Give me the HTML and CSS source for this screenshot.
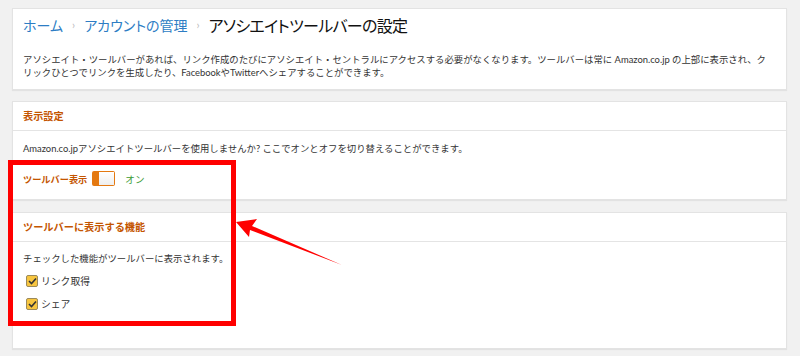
FILE: index.html
```html
<html>
    <head>
        <meta charset="UTF-8">
        <title>アソシエイトツールバーの設定</title>
        <link rel="stylesheet" href="styles.css">
    </head>
    <body>
        <div class="card intro">
            <div class="crumbs">
                <a class="crumb" href="#">ホーム</a>
                <span class="sep">›</span>
                <a class="crumb" href="#">アカウントの管理</a>
                <span class="sep">›</span>
                <span class="current">アソシエイトツールバーの設定</span>
            </div>
            <p class="desc">アソシエイト・ツールバーがあれば、リンク作成のたびにアソシエイト・セントラルにアクセスする必要がなくなります。ツールバーは常に Amazon.co.jp の上部に表示され、ク<br>リックひとつでリンクを生成したり、FacebookやTwitterへシェアすることができます。</p>
        </div>

        <div class="card">
            <div class="card-head">表示設定</div>
            <div class="card-body">
                <p class="text">Amazon.co.jpアソシエイトツールバーを使用しませんか? ここでオンとオフを切り替えることができます。</p>
                <div class="toggle-row">
                    <span class="toggle-label">ツールバー表示</span>
                    <span class="toggle"><span class="knob"></span></span>
                    <span class="toggle-state">オン</span>
                </div>
            </div>
        </div>

        <div class="card features">
            <div class="card-head">ツールバーに表示する機能</div>
            <div class="card-body">
                <p class="text">チェックした機能がツールバーに表示されます。</p>
                <label class="check"><span class="box"><svg width="9" height="8" viewBox="0 0 9 8"><path d="M1 4 L3.5 6.5 L8 1.5" fill="none" stroke="#333" stroke-width="1.6"/></svg></span>リンク取得</label>
                <label class="check"><span class="box"><svg width="9" height="8" viewBox="0 0 9 8"><path d="M1 4 L3.5 6.5 L8 1.5" fill="none" stroke="#333" stroke-width="1.6"/></svg></span>シェア</label>
            </div>
        </div>

        <!-- annotation drawn over the screenshot -->
        <div class="mark-box"></div>
        <svg class="mark-arrow" width="800" height="356" viewBox="0 0 800 356">
            <path d="M342 265 L250 230 L249 237 L236 222 L257 219 L252 226 Z" fill="#f00"/>
        </svg>
    </body>
</html>
```

FILE: styles.css
```css
body{
    margin: 0;
    padding: 8px 13px 0 12px;
    background-color: #f1f1f1;
    font-family: "Lato", "Noto Sans CJK JP", sans-serif;
    color: #333;
    position: relative;
}
.card{
    background-color: #fff;
    border: 1px solid #e3e3e3;
    box-shadow: 0 1px 1px rgba(0,0,0,0.06);
    margin-bottom: 11px;
}
.intro{
    height: 80px;
    padding: 0 10px;
}
.crumbs{
    display: flex;
    align-items: center;
    height: 31px;
    font-size: 14px;
    font-feature-settings: "palt";
}
.crumb{
    color: #2d7dc4;
    text-decoration: none;
}
.sep{
    color: #bbb;
    font-size: 11px;
    margin: 0 9px;
}
.current{
    color: #111;
    font-size: 16px;
    letter-spacing: -0.7px;
}
.desc{
    margin: 13px 0 0 0;
    font-size: 9.4px;
    line-height: 13px;
    white-space: nowrap;
}
.card-head{
    height: 28px;
    line-height: 28px;
    padding: 0 10px;
    border-bottom: 1px solid #e4e4e4;
    color: #c45500;
    font-size: 10.2px;
    font-weight: bold;
}
.card-body{
    padding: 0 10px;
    height: 68px;
}
.text{
    margin: 0;
    padding-top: 11px;
    font-size: 9.4px;
    line-height: 13px;
}
.toggle-row{
    display: flex;
    align-items: center;
    margin-top: 16px;
    font-size: 9.2px;
}
.toggle-label{
    color: #c45500;
    font-weight: bold;
}
.toggle{
    display: flex;
    width: 23px;
    height: 15px;
    box-sizing: border-box;
    margin-left: 5px;
    border: 1px solid #e47911;
    border-left: 7px solid #e47911;
    border-radius: 2px;
    background-color: #fff;
}
.knob{
    flex: 1;
    background: linear-gradient(#fff, #eee);
}
.toggle-state{
    color: #3a9a33;
    margin-left: 10px;
    font-size: 9.6px;
}
.features{
    margin-top: 12px;
}
.features .card-body{
    height: 106px;
}
.features .text{
    padding-top: 10px;
}
.check{
    display: flex;
    align-items: center;
    font-size: 9.8px;
    margin-top: 9px;
}
.check + .check{
    margin-top: 9px;
}
.box{
    display: flex;
    align-items: center;
    justify-content: center;
    width: 12px;
    height: 12px;
    box-sizing: border-box;
    margin: 0 3px 0 3px;
    border: 1px solid #9c8a5a;
    border-radius: 2px;
    background-color: #f7c53f;
}
.mark-box{
    position: absolute;
    left: 8px;
    top: 160px;
    width: 218px;
    height: 156px;
    border: 5px solid #f00;
}
.mark-arrow{
    position: absolute;
    left: 0;
    top: 0;
}
```
